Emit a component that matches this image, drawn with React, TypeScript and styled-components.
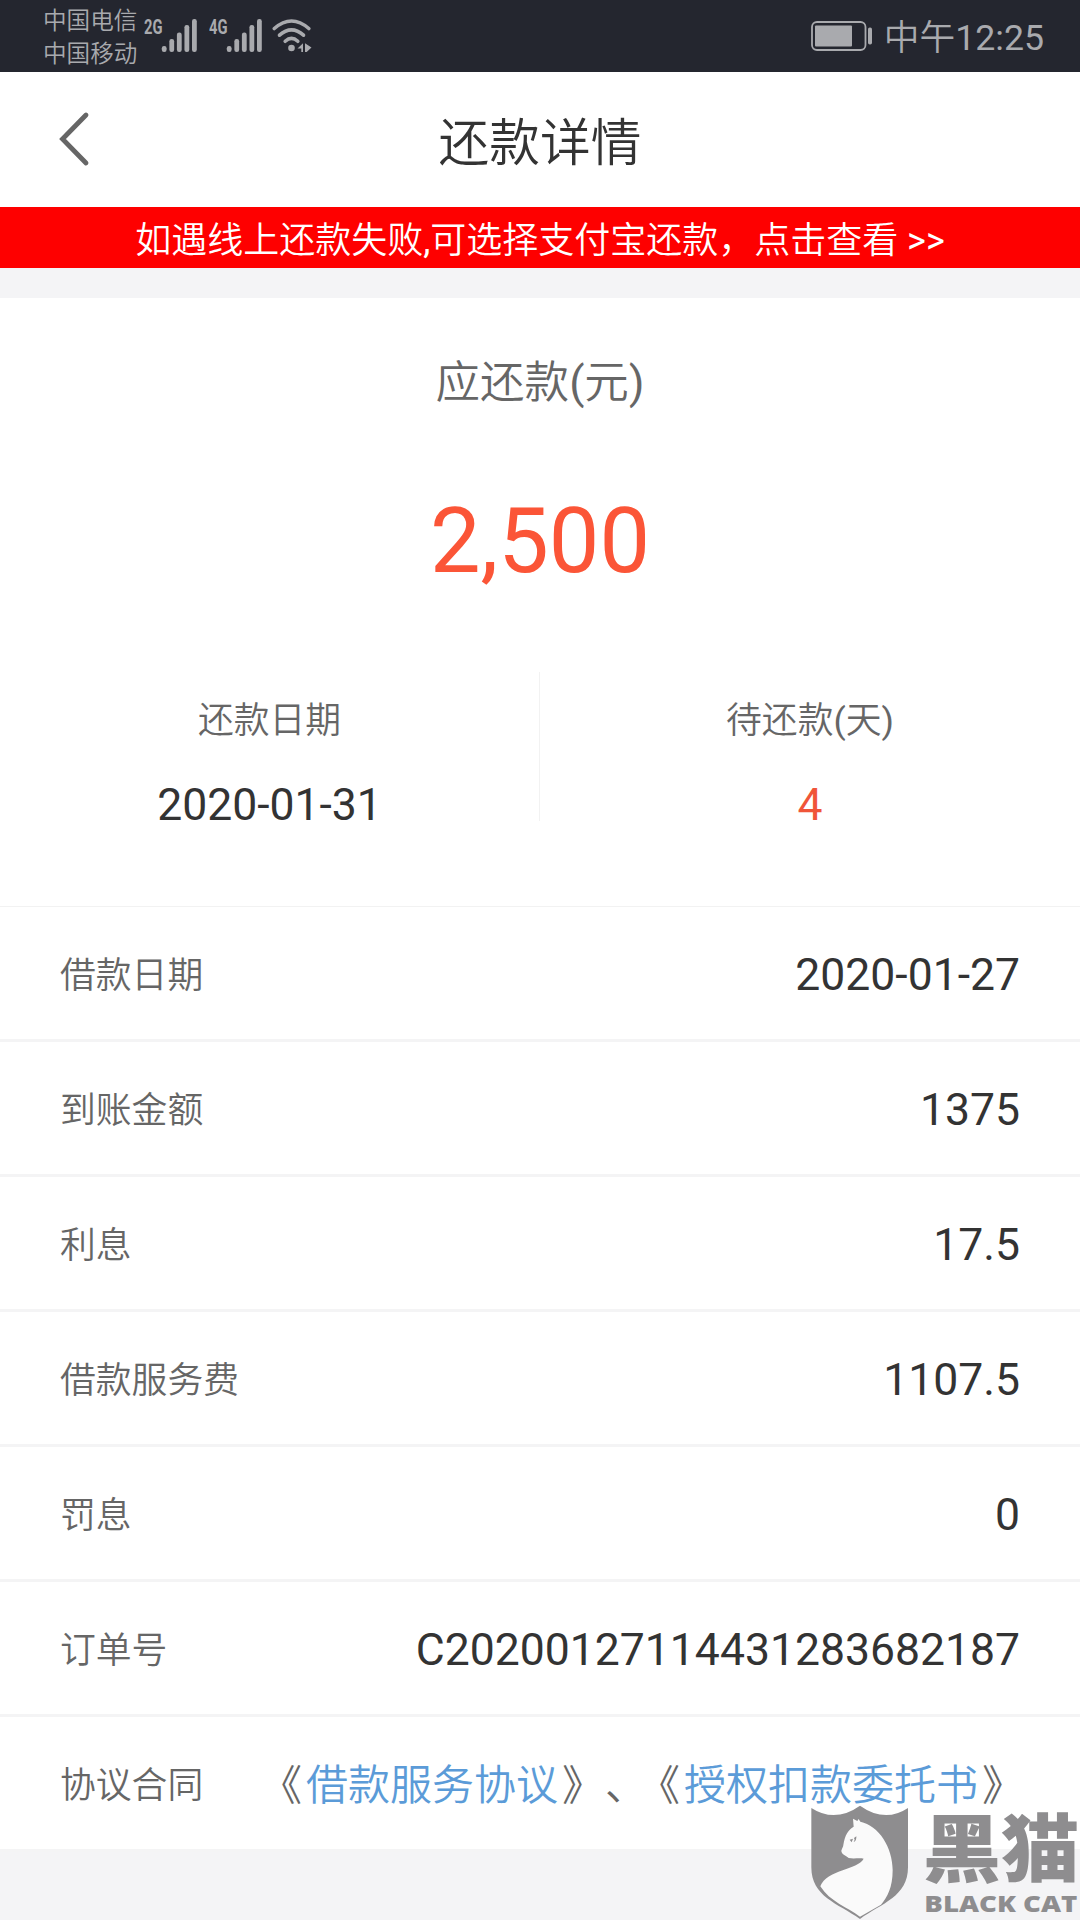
import React from 'react';
import styled, { createGlobalStyle } from 'styled-components';

const GlobalStyle = createGlobalStyle`
  * { box-sizing: border-box; }
  body {
    margin: 0;
    background: #f4f4f6;
    font-family: Roboto, 'Noto Sans CJK SC', sans-serif;
    font-weight: 400;
  }
`;

const Screen = styled.div`
  position: relative;
  width: 1080px;
  height: 1920px;
  overflow: hidden;
  display: flex;
  flex-direction: column;
  background: #f4f4f6;
`;

const Latin = styled.span`
  font-weight: 400;
`;

const StatusBar = styled.div`
  height: 72px;
  flex: none;
  display: flex;
  justify-content: space-between;
  padding: 0 36px 0 43px;
  background: #24262f;
  color: #a9aaae;
`;

const StatusGroup = styled.div`
  display: flex;
  align-items: center;
`;

const Carriers = styled.div`
  width: 101px;
  font-size: 23.6px;
  line-height: 33px;
  font-weight: 350;
  padding-top: 4px;
  white-space: nowrap;
`;

const Clock = styled.div`
  margin-left: 11px;
  font-size: 35.7px;
  line-height: 66px;
  font-weight: 350;
  padding-top: 3px;
  white-space: nowrap;
`;

const StatusIcon = styled.svg<{ $gap?: number }>`
  display: block;
  margin-left: ${(p) => p.$gap ?? 0}px;
`;

const TitleBar = styled.header`
  height: 135px;
  flex: none;
  display: grid;
  grid-template-columns: 120px 1fr 120px;
  align-items: center;
  background: #fff;
`;

const BackButton = styled.button`
  border: 0;
  background: none;
  padding: 0 0 2px 58px;
  height: 60px;
  display: flex;
  align-items: center;
`;

const Title = styled.h1`
  margin: 0;
  padding-top: 9px;
  text-align: center;
  font-size: 50.7px;
  font-weight: 350;
  line-height: 72px;
  color: #333;
`;

const Notice = styled.div`
  height: 61px;
  flex: none;
  padding-top: 3px;
  background: #fe0000;
  color: #fff;
  font-size: 36px;
  font-weight: 350;
  line-height: 62px;
  text-align: center;
  white-space: nowrap;
`;

const Summary = styled.section`
  margin-top: 30px;
  height: 609px;
  flex: none;
  display: flex;
  flex-direction: column;
  align-items: center;
  background: #fff;
  border-bottom: 1px solid #f2f2f2;
`;

const SummaryLabel = styled.div`
  margin-top: 51px;
  font-size: 44.5px;
  font-weight: 350;
  line-height: 68px;
  color: #666;
`;

const Amount = styled.div`
  margin-top: 72px;
  font-size: 90px;
  line-height: 106px;
  color: #fb5537;
`;

const SummaryColumns = styled.div`
  margin-top: 77px;
  width: 100%;
  height: 149px;
  display: grid;
  grid-template-columns: 539px 1fr;
`;

const SummaryCell = styled.div`
  display: flex;
  flex-direction: column;
  align-items: center;
  padding-top: 22px;

  & + & {
    border-left: 1px solid #f2f2f2;
  }
`;

const CellLabel = styled.div`
  font-size: 35.8px;
  font-weight: 350;
  line-height: 54px;
  color: #666;
`;

const CellValue = styled.div<{ $accent?: boolean }>`
  margin-top: 41px;
  font-size: 44.5px;
  line-height: 32px;
  color: ${(p) => (p.$accent ? '#f05539' : '#333')};
`;

const Row = styled.div`
  height: 135px;
  flex: none;
  display: flex;
  align-items: center;
  justify-content: space-between;
  padding: 0 60px;
  background: #fff;
  border-bottom: 3px solid #f4f4f5;
`;

const RowLabel = styled.div`
  font-size: 35.8px;
  font-weight: 350;
  line-height: 54px;
  padding-top: 5px;
  color: #666;
`;

const RowValue = styled.div`
  font-size: 44.5px;
  line-height: 54px;
  padding-top: 3px;
  color: #333;
`;

const Agreements = styled.div`
  font-size: 42px;
  font-weight: 350;
  line-height: 60px;
  padding-bottom: 2px;
  color: #666;
  white-space: nowrap;
  font-family: 'Noto Sans CJK SC', sans-serif;
  text-spacing-trim: space-all;
`;

const Punctuation = styled.span<{ $shift: number }>`
  margin-left: ${(p) => p.$shift}px;
  margin-right: ${(p) => -p.$shift}px;
`;

const AgreementLink = styled.a`
  color: #5b9bd8;
`;

const Watermark = styled.svg`
  position: absolute;
  left: 810px;
  top: 1803px;
  display: block;
  overflow: visible;
`;

function Signal({ label, gap }: { label: string; gap: number }) {
  const tops = [28, 21, 14.5, 7, 1];
  return (
    <StatusIcon $gap={gap} width="53" height="48" viewBox="0 -6 53 48" fill="#a9aaae">
      <text x="0" y="15.7" fontSize="20.5" fontWeight="700" textLength="18.5" lengthAdjust="spacingAndGlyphs">
        {label}
      </text>
      {tops.map((top, i) => (
        <rect key={top} x={17.8 + i * 7.55} y={top} width="4.8" height={34 - top} rx="2.2" />
      ))}
    </StatusIcon>
  );
}

function Wifi() {
  return (
    <StatusIcon $gap={10} width="40" height="36" viewBox="0 0 40 36" fill="none" stroke="#a9aaae" strokeWidth="3.6" strokeLinecap="round">
      <path d="M2.3 10.5Q19.5 -4.5 36.8 10.5" />
      <path d="M7.5 17.2Q19.5 6.6 31.5 17.2" />
      <path d="M13.2 23.3Q19.5 17.5 25.8 23.3" />
      <circle cx="19.5" cy="30" r="3.3" fill="#a9aaae" stroke="none" />
      <path d="M25.5 30.5L31 25.3V34H29.3V30.5ZM33 25.3L39.5 29.5L34.7 34H33Z" fill="#a9aaae" stroke="none" />
    </StatusIcon>
  );
}

function Battery() {
  return (
    <StatusIcon width="62" height="32" viewBox="0 -0.5 62 32" fill="#a9aaae">
      <rect x="1" y="1.5" width="53.5" height="28" rx="5" fill="none" stroke="#a9aaae" strokeWidth="1.8" />
      <rect x="4" y="5" width="37" height="21" rx="1" />
      <rect x="57" y="7" width="4" height="17" rx="1.8" />
    </StatusIcon>
  );
}

function BlackCat() {
  return (
    <Watermark width="270" height="117" viewBox="90 69 810 351">
      <path
        fill="#8e8d8f"
        d="M94 84Q165 130 240 77Q315 130 384 84V262C384 350 305 370 240 417C173 370 94 350 94 262Z"
      />
      <path
        fill="#fafafa"
        d="M219 116L232 123L236 117L241 125C296 136 338 202 338 270C338 322 322 352 303 374C282 387 261 397 240 410C203 382 149 365 121 319C140 268 233 270 251 236C240 233 221 237 206 234C200 227 184 224 184 212C186 204 190 201 190 195C195 164 205 150 221 140Z"
      />
      <path fill="#8e8d8f" d="M209 179L219 176L215 187ZM222 174L229 169Q230 183 221 186L224 179Z" />
      <text x="428" y="288" fontFamily="Noto Sans CJK SC" fontWeight="900" fontSize="220" textLength="470" lengthAdjust="spacingAndGlyphs" fill="#8e8d8f">
        黑猫
      </text>
      <text x="433" y="396" fontFamily="Open Sans, sans-serif" fontWeight="800" fontSize="66" textLength="459" lengthAdjust="spacingAndGlyphs" fill="#8e8d8f">
        BLACK CAT
      </text>
    </Watermark>
  );
}

const details = [
  ['借款日期', '2020-01-27'],
  ['到账金额', '1375'],
  ['利息', '17.5'],
  ['借款服务费', '1107.5'],
  ['罚息', '0'],
  ['订单号', 'C20200127114431283682187'],
];

export default function App() {
  return (
    <Screen lang="zh-CN">
      <GlobalStyle />
      <StatusBar>
        <StatusGroup>
          <Carriers>
            <div>中国电信</div>
            <div>中国移动</div>
          </Carriers>
          <Signal label="2G" gap={0} />
          <Signal label="4G" gap={12} />
          <Wifi />
        </StatusGroup>
        <StatusGroup>
          <Battery />
          <Clock>
            中午<Latin>12:25</Latin>
          </Clock>
        </StatusGroup>
      </StatusBar>
      <TitleBar>
        <BackButton aria-label="返回">
          <svg width="32" height="56" viewBox="0 0 32 56" fill="none" stroke="#666" strokeWidth="4.8" strokeLinecap="round" strokeLinejoin="miter">
            <path d="M28 4L4.5 28L28 52" />
          </svg>
        </BackButton>
        <Title>还款详情</Title>
      </TitleBar>
      <Notice>
        如遇线上还款失败<Latin>,</Latin>可选择支付宝还款，点击查看 <Latin>&gt;&gt;</Latin>
      </Notice>
      <Summary>
        <SummaryLabel>
          应还款<Latin>(</Latin>元<Latin>)</Latin>
        </SummaryLabel>
        <Amount>2,500</Amount>
        <SummaryColumns>
          <SummaryCell>
            <CellLabel>还款日期</CellLabel>
            <CellValue>2020-01-31</CellValue>
          </SummaryCell>
          <SummaryCell>
            <CellLabel>
              待还款<Latin>(</Latin>天<Latin>)</Latin>
            </CellLabel>
            <CellValue $accent>4</CellValue>
          </SummaryCell>
        </SummaryColumns>
      </Summary>
      {details.map(([label, value]) => (
        <Row key={label}>
          <RowLabel>{label}</RowLabel>
          <RowValue>{value}</RowValue>
        </Row>
      ))}
      <Row>
        <RowLabel>协议合同</RowLabel>
        <Agreements>
          <Punctuation $shift={-4}>《</Punctuation>
          <AgreementLink>借款服务协议</AgreementLink>
          <Punctuation $shift={4}>》</Punctuation>
          <Punctuation $shift={5}>、</Punctuation>
          <Punctuation $shift={-4}>《</Punctuation>
          <AgreementLink>授权扣款委托书</AgreementLink>
          <Punctuation $shift={4}>》</Punctuation>
        </Agreements>
      </Row>
      <BlackCat />
    </Screen>
  );
}
